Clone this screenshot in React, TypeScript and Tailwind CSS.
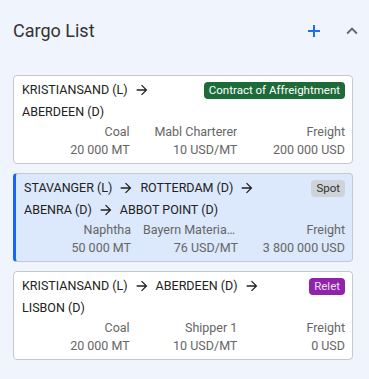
import { Fragment } from 'react';

type Cargo = {
    stops: string[];
    tag: string;
    tagClass: string;
    product: string;
    qty: string;
    party: string;
    rate: string;
    freight: string;
    selected?: boolean;
};

const cargos: Cargo[] = [
    {
        stops: ['KRISTIANSAND (L)', 'ABERDEEN (D)'],
        tag: 'Contract of Affreightment',
        tagClass: 'bg-[#1e6b3a] text-white',
        product: 'Coal',
        qty: '20 000 MT',
        party: 'Mabl Charterer',
        rate: '10 USD/MT',
        freight: '200 000 USD',
    },
    {
        stops: ['STAVANGER (L)', 'ROTTERDAM (D)', 'ABENRA (D)', 'ABBOT POINT (D)'],
        tag: 'Spot',
        tagClass: 'bg-[#cfd2d6] text-[#333]',
        product: 'Naphtha',
        qty: '50 000 MT',
        party: 'Bayern Materials Trading',
        rate: '76 USD/MT',
        freight: '3 800 000 USD',
        selected: true,
    },
    {
        stops: ['KRISTIANSAND (L)', 'ABERDEEN (D)', 'LISBON (D)'],
        tag: 'Relet',
        tagClass: 'bg-[#8e24aa] text-[#f3dcf7]',
        product: 'Coal',
        qty: '20 000 MT',
        party: 'Shipper 1',
        rate: '10 USD/MT',
        freight: '0 USD',
    },
];

function Arrow() {
    return (
        <svg width="16" height="16" viewBox="0 0 24 24" className="shrink-0 text-[#222]">
            <path fill="currentColor" d="M12 4l-1.41 1.41L16.17 11H4v2h12.17l-5.58 5.59L12 20l8-8z" />
        </svg>
    );
}

function CargoCard({ c }: { c: Cargo }) {
    return (
        <div
            className={
                'rounded border border-[#c6c8cc] pt-[3px] pb-[4px] pr-[7px] ' +
                (c.selected
                    ? 'bg-[#dce8fb] border-l-[3px] border-l-[#1565ff] pl-[8px]'
                    : 'bg-white pl-[8px]')
            }
        >
            <div className="flex items-start gap-2">
                <div className="flex flex-1 flex-wrap items-center text-[12.5px] leading-[22px] text-[#222]">
                    {c.stops.map((s, i) => (
                        <Fragment key={i}>
                            <span className="mr-[6px] whitespace-nowrap">{s}</span>
                            {i < c.stops.length - 1 && (
                                <span className="mr-[6px] flex items-center">
                                    <Arrow />
                                </span>
                            )}
                        </Fragment>
                    ))}
                </div>
                <span
                    className={
                        'mt-[3px] shrink-0 rounded px-[5px] text-[11.5px] leading-[17px] ' + c.tagClass
                    }
                >
                    {c.tag}
                </span>
            </div>
            <div className="grid grid-cols-3 text-right text-[12.5px] leading-[18px] text-[#666]">
                <div>{c.product}</div>
                <div className="truncate pl-3">{c.party}</div>
                <div>Freight</div>
                <div>{c.qty}</div>
                <div>{c.rate}</div>
                <div>{c.freight}</div>
            </div>
        </div>
    );
}

export default function App() {
    return (
        <div
            className="min-h-[379px] w-[369px] bg-[#f0f4fc] pt-[19px]"
            style={{ fontFamily: 'Roboto, "Liberation Sans", sans-serif' }}
        >
            <div className="flex items-center pl-[13px] pr-[6px]">
                <h2 className="flex-1 text-[18px] leading-[24px] text-[#333]">Cargo List</h2>
                <button className="mr-[20px] text-[#1a6ef0]">
                    <svg width="14" height="14" viewBox="0 0 14 14">
                        <path d="M7 1v12M1 7h12" stroke="currentColor" strokeWidth="2" />
                    </svg>
                </button>
                <button className="text-[#666]">
                    <svg width="22" height="22" viewBox="0 0 24 24">
                        <path fill="currentColor" d="M7.41 15.41L12 10.83l4.59 4.58L18 14l-6-6-6 6z" />
                    </svg>
                </button>
            </div>
            <div className="mt-[32px] flex flex-col gap-[9px] pl-[13px] pr-[16px]">
                {cargos.map((c, i) => (
                    <CargoCard key={i} c={c} />
                ))}
            </div>
        </div>
    );
}
